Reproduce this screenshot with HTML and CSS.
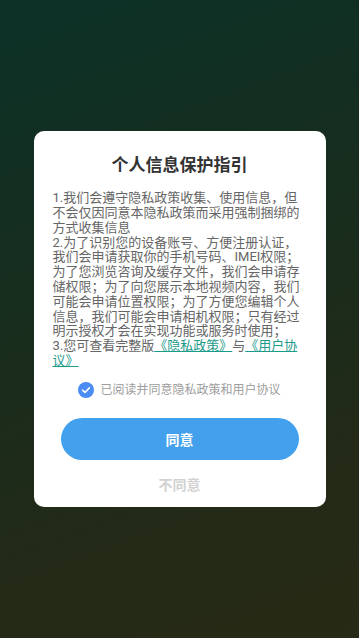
FILE: index.html
```html
<!DOCTYPE html>
<html lang="zh-CN">
<head>
<meta charset="utf-8">
<meta name="viewport" content="width=device-width, initial-scale=1">
<title>个人信息保护指引</title>
<link rel="stylesheet" href="styles.css">
</head>
<body>
<div class="screen">
  <div class="dialog">
    <h1 class="title">个人信息保护指引</h1>
    <p class="body">1.我们会遵守隐私政策收集、使用信息，但不会仅因同意本隐私政策而采用强制捆绑的方式收集信息<br>2.为了识别您的设备账号、方便注册认证，我们会申请获取你的手机号码、IMEI权限；为了您浏览咨询及缓存文件，我们会申请存储权限；为了向您展示本地视频内容，我们可能会申请位置权限；为了方便您编辑个人信息，我们可能会申请相机权限；只有经过明示授权才会在实现功能或服务时使用；<br>3.您可查看完整版<a class="link" href="#">《隐私政策》</a>与<a class="link" href="#">《用户协议》</a></p>
    <div class="agree-row">
      <svg class="check" viewBox="0 0 16 16" width="16" height="16" aria-hidden="true">
        <circle cx="8" cy="8" r="8" fill="#4b8bf4"/>
        <path d="M4.6 8.2 L7 10.5 L11.4 5.9" fill="none" stroke="#fff" stroke-width="1.6" stroke-linecap="round" stroke-linejoin="round"/>
      </svg>
      <span class="agree-text">已阅读并同意隐私政策和用户协议</span>
    </div>
    <button class="btn-agree" type="button">同意</button>
    <button class="btn-disagree" type="button">不同意</button>
  </div>
</div>
</body>
</html>
```

FILE: styles.css
```css
html, body {
  margin: 0;
  padding: 0;
}

body {
  font-family: Roboto, "Noto Sans CJK SC", sans-serif;
}

.screen {
  width: 359px;
  height: 638px;
  background: linear-gradient(160deg, #0b3127 0%, #172d1e 40%, #232a17 75%, #272a15 100%);
  display: flex;
  align-items: center;
  justify-content: center;
}

.dialog {
  width: 292px;
  box-sizing: border-box;
  background: #fff;
  border-radius: 10px;
  padding: 23px 19px 12px;
  display: flex;
  flex-direction: column;
  align-items: center;
}

.title {
  margin: 0;
  font-size: 17px;
  line-height: 22px;
  font-weight: bold;
  color: #333;
}

.body {
  margin: 15px 0 0;
  align-self: stretch;
  font-size: 13px;
  line-height: 14.8px;
  color: #666;
}

.link {
  color: #1c9b8b;
  text-decoration: underline;
}

.agree-row {
  margin-top: 13px;
  display: flex;
  align-items: center;
  gap: 6px;
  height: 17px;
}

.check {
  display: block;
  width: 16px;
  height: 16px;
}

.agree-text {
  font-size: 12px;
  line-height: 17px;
  color: #9d9d9d;
}

.btn-agree {
  margin-top: 19px;
  width: 238px;
  height: 42px;
  border: none;
  border-radius: 21px;
  background: #42a0ec;
  color: #fff;
  font-family: inherit;
  font-size: 14px;
  font-weight: bold;
  padding: 0;
}

.btn-disagree {
  margin-top: 15px;
  border: none;
  background: none;
  padding: 0;
  font-family: inherit;
  font-size: 14px;
  line-height: 20px;
  font-weight: bold;
  color: #d2d2d2;
}
```
